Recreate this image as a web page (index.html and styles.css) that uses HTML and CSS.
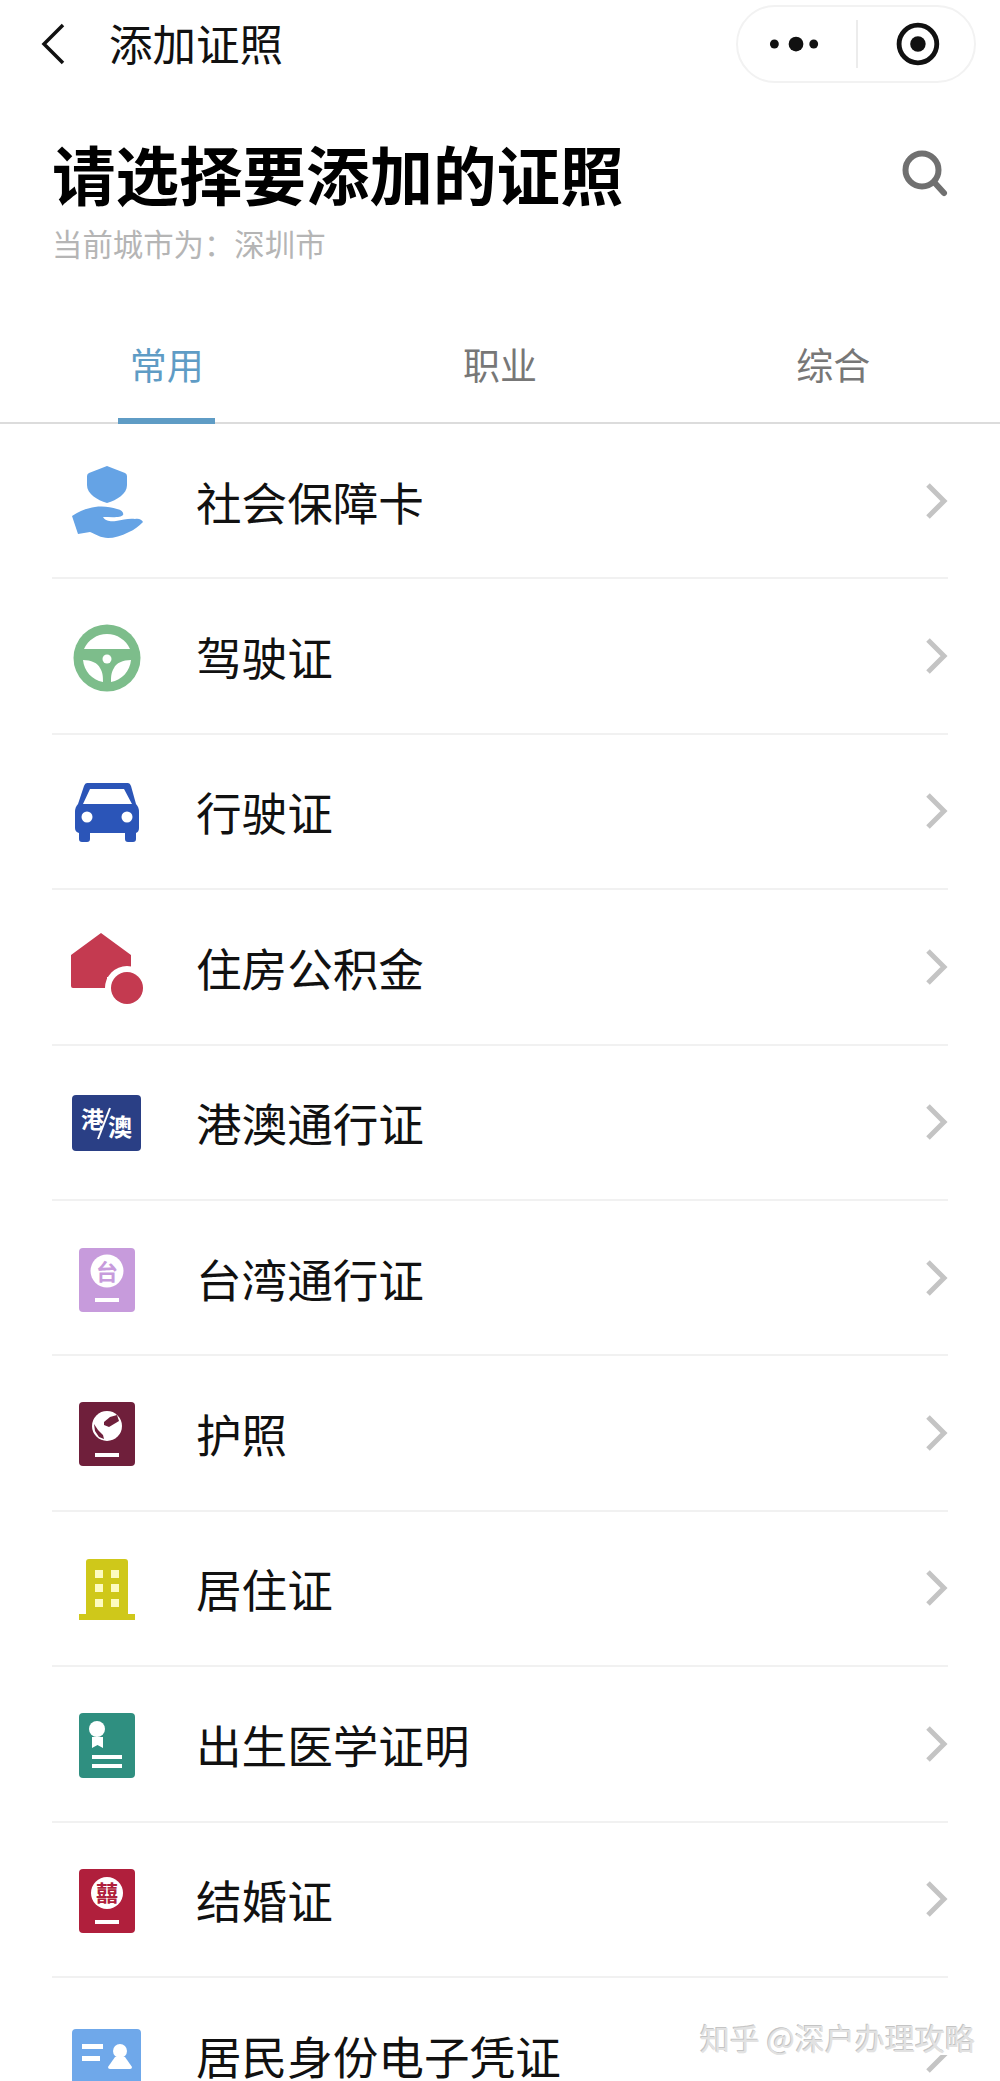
FILE: index.html
```html
<!DOCTYPE html>
<html lang="zh-CN">

<head>
  <meta charset="UTF-8" />
  <meta name="viewport" content="width=device-width, initial-scale=1.0" />
  <title>添加证照</title>
  <link rel="stylesheet" href="styles.css">
</head>

<body>
  <div class="page">
    <div class="nav">
      <svg class="nav-back" width="24" height="42" viewBox="0 0 24 42">
        <path d="M22 2 L3 21 L22 40" fill="none" stroke="#111" stroke-width="3.5" />
      </svg>
      <span class="nav-title">添加证照</span>
      <div class="capsule">
        <svg class="capsule-more" width="120" height="30" viewBox="0 0 120 30">
          <circle cx="37" cy="15" r="4.5" fill="#111" />
          <circle cx="59" cy="15" r="7.5" fill="#111" />
          <circle cx="77" cy="15" r="4.5" fill="#111" />
        </svg>
        <svg class="capsule-close" width="120" height="48" viewBox="0 0 120 48">
          <circle cx="62" cy="24" r="19.5" fill="none" stroke="#111" stroke-width="5" />
          <circle cx="62" cy="24" r="8" fill="#111" />
        </svg>
      </div>
    </div>

    <div class="head">
      <div class="head-text">
        <h1>请选择要添加的证照</h1>
        <p>当前城市为：深圳市</p>
      </div>
      <svg class="head-search" width="48" height="50" viewBox="0 0 48 50">
        <circle cx="21" cy="21" r="16.5" fill="none" stroke="#707070" stroke-width="6" />
        <path d="M33 33 L43 44" fill="none" stroke="#707070" stroke-width="6" stroke-linecap="round" />
      </svg>
    </div>

    <ul class="tabs">
      <li class="active"><span>常用</span></li>
      <li><span>职业</span></li>
      <li><span>综合</span></li>
    </ul>

    <ul class="cards">
      <li>
        <svg class="card-icon" viewBox="0 0 80 80">
          <path fill="#65a3e5" d="M40 5 L58 12 Q60 13 60 15 V24 C60 33 50 39 40 42 C30 39 20 33 20 24 V15 Q20 13 22 12 Z" />
          <path fill="#65a3e5" d="M5 55 C13 50 20 47 28 46 C36 45 44 46 50 48 C55 49 57 52 56 54 C54 57 44 56 36 56 C38 60 44 61 49 60 C56 59 62 57 68 58 C72 57 75 59 76 61 C72 65 67 69 62 71 C54 75 47 77 41 77 C34 77 28 73 23 71 L11 73 Z" />
        </svg>
        <span>社会保障卡</span>
        <svg class="card-arrow" viewBox="0 0 24 40"><path d="M4 4 L20 20 L4 36" /></svg>
      </li>
      <li>
        <svg class="card-icon" viewBox="0 0 80 80">
          <circle cx="40" cy="42" r="33.5" fill="#7dbd8b" />
          <path fill="#fff" d="M17 33 C21 24 30 18 40 18 C50 18 59 24 63 33 Z" />
          <path fill="#fff" d="M16 44 C24 44 31 47 33 52 C36 57 36 61 36 66 C25 64 17 55 16 44 Z" />
          <path fill="#fff" d="M64 44 C56 44 49 47 47 52 C44 57 44 61 44 66 C55 64 63 55 64 44 Z" />
          <circle cx="40" cy="43" r="4.5" fill="#fff" />
        </svg>
        <span>驾驶证</span>
        <svg class="card-arrow" viewBox="0 0 24 40"><path d="M4 4 L20 20 L4 36" /></svg>
      </li>
      <li>
        <svg class="card-icon" viewBox="0 0 80 80">
          <path fill="#2b55b8" d="M20 12 H61 Q63 12 64 15 L69 33 Q72 36 72 41 V57 Q72 61 69 62 V68 Q69 71 66 71 H61 Q58 71 58 68 V62 H23 V68 Q23 71 20 71 H15 Q12 71 12 68 V62 Q8 61 8 57 V41 Q8 36 11 33 L17 15 Q18 12 20 12 Z" />
          <path fill="#fff" d="M23 18 H57 L65 33 H16 Z" />
          <circle cx="20" cy="46" r="5.5" fill="#fff" />
          <circle cx="60" cy="46" r="5.5" fill="#fff" />
        </svg>
        <span>行驶证</span>
        <svg class="card-arrow" viewBox="0 0 24 40"><path d="M4 4 L20 20 L4 36" /></svg>
      </li>
      <li>
        <svg class="card-icon" viewBox="0 0 80 80">
          <path fill="#c43a50" d="M34 6 L64 28 V50 H40 V61 H6 Q4 61 4 59 V28 Z" />
          <circle cx="60" cy="61" r="22" fill="#fff" />
          <circle cx="60" cy="61" r="16" fill="#c43a50" />
        </svg>
        <span>住房公积金</span>
        <svg class="card-arrow" viewBox="0 0 24 40"><path d="M4 4 L20 20 L4 36" /></svg>
      </li>
      <li>
        <svg class="card-icon" viewBox="0 0 80 80">
          <rect x="5" y="13" width="69" height="56" rx="4" fill="#2a3f85" />
          <text class="icon-text" x="14" y="46" font-size="23" font-weight="700" fill="#fff">港</text>
          <text class="icon-text" x="41" y="54" font-size="24" font-weight="700" fill="#fff">澳</text>
          <path d="M43 26 L31 57" stroke="#fff" stroke-width="2" />
        </svg>
        <span>港澳通行证</span>
        <svg class="card-arrow" viewBox="0 0 24 40"><path d="M4 4 L20 20 L4 36" /></svg>
      </li>
      <li>
        <svg class="card-icon" viewBox="0 0 80 80">
          <rect x="12" y="10" width="56" height="64" rx="4" fill="#c79bdc" />
          <circle cx="40" cy="33" r="16.5" fill="#fff" />
          <text class="icon-text" x="29" y="41.500" font-size="22" font-weight="700" fill="#c79bdc">台</text>
          <rect x="28" y="60" width="24" height="4" fill="#fff" />
        </svg>
        <span>台湾通行证</span>
        <svg class="card-arrow" viewBox="0 0 24 40"><path d="M4 4 L20 20 L4 36" /></svg>
      </li>
      <li>
        <svg class="card-icon" viewBox="0 0 80 80">
          <rect x="12" y="9" width="56" height="64" rx="4" fill="#6f1f3b" />
          <circle cx="40" cy="33" r="15" fill="#fff" />
          <path fill="#6f1f3b" d="M37 29 L43 24 L50 22 L52 28 L47 31 L42 34 L37 32 Z" />
          <path fill="#6f1f3b" d="M27 31 L31 37 L36 42 L37 46 L32 44 L28 38 Z" />
          <rect x="28" y="60" width="24" height="4" fill="#fff" />
        </svg>
        <span>护照</span>
        <svg class="card-arrow" viewBox="0 0 24 40"><path d="M4 4 L20 20 L4 36" /></svg>
      </li>
      <li>
        <svg class="card-icon" viewBox="0 0 80 80">
          <path fill="#cfc81a" d="M22 11 H58 Q61 11 61 14 V66 H68 V72 H12 V66 H19 V14 Q19 11 22 11 Z" />
          <path fill="#fdfbc0" d="M28 22 h8 v8 h-8 Z M44 22 h8 v8 h-8 Z M28 36 h8 v8 h-8 Z M44 36 h8 v8 h-8 Z M28 51 h8 v8 h-8 Z M44 51 h8 v8 h-8 Z" />
        </svg>
        <span>居住证</span>
        <svg class="card-arrow" viewBox="0 0 24 40"><path d="M4 4 L20 20 L4 36" /></svg>
      </li>
      <li>
        <svg class="card-icon" viewBox="0 0 80 80">
          <rect x="12" y="9" width="56" height="65" rx="4" fill="#2f8f80" />
          <circle cx="30" cy="25" r="8" fill="#fff" />
          <path fill="#fff" d="M25 33 H36 V44 L30.500 41 L25 44 Z" />
          <rect x="25" y="51" width="30" height="4" fill="#fff" />
          <rect x="25" y="60" width="30" height="4" fill="#fff" />
        </svg>
        <span>出生医学证明</span>
        <svg class="card-arrow" viewBox="0 0 24 40"><path d="M4 4 L20 20 L4 36" /></svg>
      </li>
      <li>
        <svg class="card-icon" viewBox="0 0 80 80">
          <rect x="12" y="10" width="56" height="64" rx="4" fill="#b01f3c" />
          <circle cx="40" cy="34" r="16" fill="#fff" />
          <text class="icon-text" x="29" y="42" font-size="22" font-weight="700" fill="#b01f3c">囍</text>
          <rect x="28" y="61" width="24" height="4" fill="#fff" />
        </svg>
        <span>结婚证</span>
        <svg class="card-arrow" viewBox="0 0 24 40"><path d="M4 4 L20 20 L4 36" /></svg>
      </li>
      <li>
        <svg class="card-icon" viewBox="0 0 80 80">
          <rect x="5" y="14" width="69" height="58" rx="4" fill="#6fa8ea" />
          <rect x="15" y="29" width="21" height="5" fill="#fff" />
          <rect x="15" y="41" width="18" height="5" fill="#fff" />
          <circle cx="53" cy="36" r="7" fill="#fff" />
          <path fill="#fff" d="M48 42 H58 L65 52 Q65 54 63 54 H43 Q41 54 41 52 Z" />
        </svg>
        <span>居民身份电子凭证</span>
        <svg class="card-arrow" viewBox="0 0 24 40"><path d="M4 4 L20 20 L4 36" /></svg>
      </li>
    </ul>

    <div class="watermark">知乎 @深户办理攻略</div>
  </div>
</body>

</html>
```

FILE: styles.css
```css
* {
  box-sizing: border-box;
}

html,
body {
  margin: 0;
  padding: 0;
  background: #fff;
}

body {
  font-family: "Noto Sans CJK SC", "Liberation Sans", sans-serif;
}

ul {
  margin: 0;
  padding: 0;
  list-style: none;
}

.page {
  position: relative;
  width: 1000px;
  height: 2081px;
  overflow: hidden;
}

.nav {
  height: 88px;
  padding-left: 41px;
  padding-right: 24px;
  display: flex;
  align-items: center;
}

.nav-back {
  margin-right: 44px;
  flex: none;
}

.nav-title {
  font-size: 43.500px;
  line-height: 50px;
  margin-bottom: 2px;
  color: #111;
}

.capsule {
  margin-left: auto;
  width: 240px;
  height: 78px;
  border: 2px solid #f2f2f2;
  border-radius: 39px;
  display: flex;
  align-items: center;
}

.capsule svg {
  flex: none;
  width: 118px;
}

.capsule-close {
  border-left: 2px solid #ececec;
  height: 48px;
}

.head {
  padding: 46px 52px 0 52px;
  display: flex;
  justify-content: space-between;
  align-items: flex-start;
}

.head h1 {
  margin: 0;
  font-size: 63.500px;
  line-height: 76px;
  font-weight: 700;
  color: #000;
}

.head p {
  margin: 12px 0 0 0;
  font-size: 30.400px;
  line-height: 42px;
  color: #b5b5b5;
}

.head-search {
  margin-top: 15px;
  margin-right: -1px;
}

.tabs {
  margin-top: 38px;
  height: 122px;
  border-bottom: 2px solid #dcdcdc;
  display: flex;
}

.tabs li {
  flex: 1;
  display: flex;
  justify-content: center;
  font-size: 37px;
  color: #777;
}

.tabs span {
  display: block;
  width: 97px;
  height: 122px;
  padding-top: 35px;
  line-height: 54px;
  text-align: center;
}

.tabs .active {
  color: #5f9cc5;
}

.tabs .active span {
  border-bottom: 6px solid #5f9cc5;
}

.cards li {
  height: 155.400px;
  margin: 0 52px 0 52px;
  padding-left: 15px;
  border-bottom: 2px solid #f1f1f1;
  display: flex;
  align-items: center;
  font-size: 45.600px;
  line-height: 46px;
  color: #111;
}

.card-icon {
  flex: none;
  width: 80px;
  height: 80px;
  margin-right: 49px;
}

.card-arrow {
  flex: none;
  width: 24px;
  height: 40px;
  margin-left: auto;
  fill: none;
  stroke: #c4c4c4;
  stroke-width: 5;
}

.icon-text {
  font-family: "Noto Sans CJK SC", sans-serif;
}

.watermark {
  position: absolute;
  right: 25px;
  top: 2019px;
  height: 36px;
  padding-left: 4px;
  background: #fff;
  font-size: 30px;
  line-height: 36px;
  white-space: nowrap;
  color: #e2e2e2;
  text-shadow: -1px -1px 0 #c4c4c4;
}
```
